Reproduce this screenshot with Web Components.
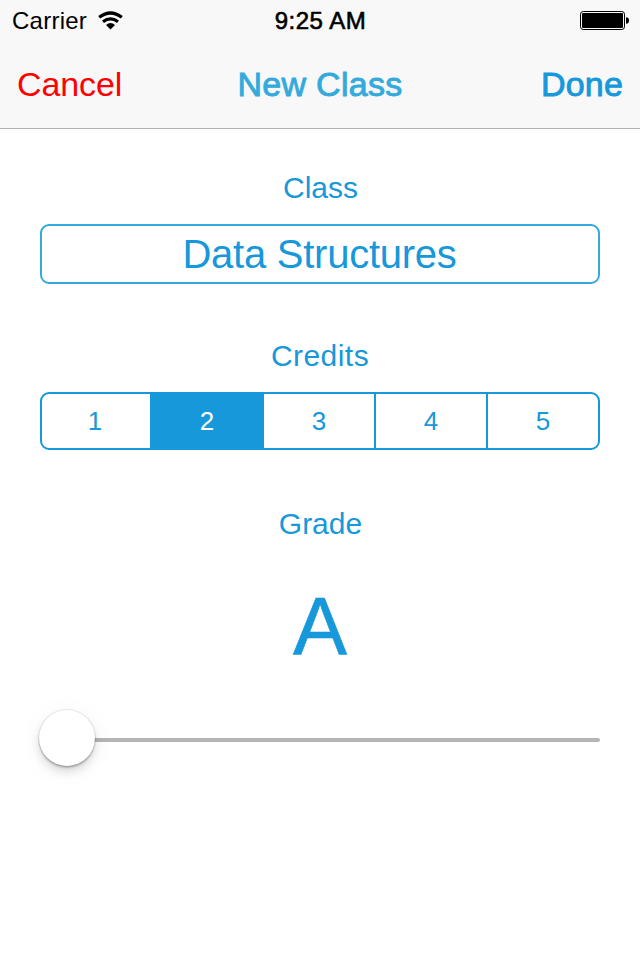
<!DOCTYPE html>
<html lang="en">
<head>
<meta charset="utf-8">
<title>New Class</title>
<style>
html, body { margin: 0; height: 100%; background: #fff; }
body { font-family: "Liberation Sans", Arial, sans-serif; color: #1698da; overflow: hidden; }
</style>
</head>
<body>
<class-editor></class-editor>
<script>
const define = (name, html) => customElements.define(name, class extends HTMLElement {
  connectedCallback() {
    if (this.shadowRoot) return;
    const t = document.createElement('template');
    t.innerHTML = html;
    this.attachShadow({ mode: 'open' }).append(t.content.cloneNode(true));
  }
});

define('status-bar', `
<style>
:host { display: grid; grid-template-columns: 1fr auto 1fr; align-items: center; height: 41px; padding: 0 11px 0 12px; font-size: 24px; color: #000; }
.left { display: flex; align-items: center; gap: 11px; letter-spacing: .25px; }
.time { -webkit-text-stroke: .6px #000; letter-spacing: .5px; }
.battery { justify-self: end; }
svg { display: block; }
</style>
<div class="left"><span>Carrier</span>
<svg width="25" height="19" viewBox="0 0 25 19"><g fill="none" stroke="#000" stroke-width="3.3"><path d="M1.2 6.3Q12.5-2.3 23.8 6.3"/><path d="M5 10.7Q12.5 5.1 20 10.7"/></g><path d="M8 14Q12.5 10.2 17 14L12.5 18.6Z"/></svg></div>
<span class="time">9:25 AM</span>
<svg class="battery" width="49" height="19" viewBox="0 0 49 19"><rect x=".5" y=".5" width="44" height="18" rx="2.7" fill="none" stroke="#000"/><rect x="2" y="2" width="41" height="15" rx="1"/><path d="M46 6.2Q49 6.2 49 9.5T46 12.8Z"/></svg>`);

define('nav-bar', `
<style>
:host { display: grid; grid-template-columns: 1fr auto 1fr; align-items: center; height: 87px; padding: 0 17px; font-size: 34px; border-bottom: 1px solid #b2b2b2; }
.cancel { color: #f00; letter-spacing: -.1px; }
.title { color: #34aadc; -webkit-text-stroke: .9px #34aadc; letter-spacing: .3px; }
.done { justify-self: end; -webkit-text-stroke: .9px #1698da; letter-spacing: .2px; }
</style>
<span class="cancel"><slot name="cancel"></slot></span>
<span class="title"><slot></slot></span>
<span class="done"><slot name="done"></slot></span>`);

define('field-label', `
<style>:host { display: block; font-size: 30px; line-height: 36px; text-align: center; letter-spacing: var(--track, 0); }</style><slot></slot>`);

define('text-field', `
<style>:host { display: block; box-sizing: border-box; height: 60px; border: 2px solid #34aadc; border-radius: 9px; font-size: 40px; line-height: 57px; text-align: center; letter-spacing: -.25px; padding-right: 1px; }</style><slot></slot>`);

define('segment-item', `
<style>
:host { display: flex; align-items: center; justify-content: center; font-size: 26px; border-left: 2px solid #1698da; }
:host(:first-child) { border-left: 0; padding-right: 2px; }
:host([selected]) { background: #1698da; color: #fff; }
</style><slot></slot>`);

define('segmented-control', `
<style>:host { display: grid; grid-template-columns: 108px repeat(4, 112px); box-sizing: border-box; height: 58px; border: 2px solid #1698da; border-radius: 9px; overflow: hidden; }</style><slot></slot>`);

define('grade-slider', `
<style>
:host { display: flex; align-items: center; height: 60px; }
.thumb { flex: none; width: 56px; height: 56px; margin: -4px 0 0 -1px; border-radius: 50%; background: #fff; box-shadow: 0 0 0 1px rgba(0,0,0,.07), 0 2px 2px rgba(0,0,0,.22), 0 6px 10px rgba(0,0,0,.12), 0 4px 26px rgba(0,0,0,.05); z-index: 1; }
.track { flex: 1; height: 4px; margin-left: -1px; background: #b5b5b5; border-radius: 0 2px 2px 0; }
</style><div class="thumb"></div><div class="track"></div>`);

define('class-editor', `
<style>
:host { display: block; height: 960px; background: #fff; }
header { background: #f8f8f8; }
main { padding: 41px 40px 0; display: flex; flex-direction: column; }
.name { padding-left: 1px; }
text-field, segmented-control { margin-top: 18px; }
.next { margin-top: 54px; --track: .45px; }
.grade { margin-top: 56px; padding-left: 1px; }
.value { font-size: 81px; line-height: 89px; text-align: center; margin: 40px 0 1px; -webkit-text-stroke: .6px currentColor; }
grade-slider { margin-top: 38px; }
</style>
<header><status-bar></status-bar>
<nav-bar><span slot="cancel">Cancel</span>New Class<span slot="done">Done</span></nav-bar></header>
<main>
<field-label class="name">Class</field-label>
<text-field>Data Structures</text-field>
<field-label class="next">Credits</field-label>
<segmented-control><segment-item>1</segment-item><segment-item selected>2</segment-item><segment-item>3</segment-item><segment-item>4</segment-item><segment-item>5</segment-item></segmented-control>
<field-label class="grade">Grade</field-label>
<div class="value">A</div>
<grade-slider></grade-slider>
</main>`);
</script>
</body>
</html>
